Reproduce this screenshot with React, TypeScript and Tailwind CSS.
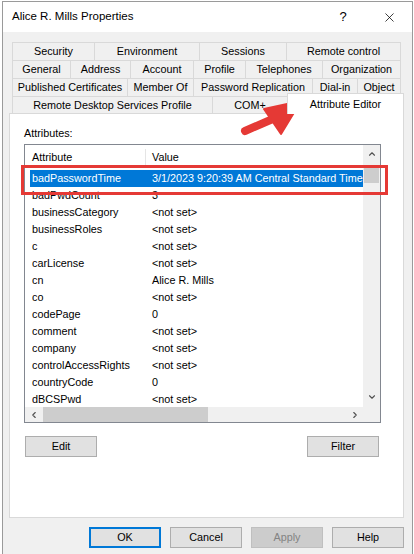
import React from 'react';
import { X, ChevronUp, ChevronDown, ChevronLeft, ChevronRight } from 'lucide-react';

type Tab = [string, number];

const tabRows: Tab[][] = [
  [['Security', 82], ['Environment', 105], ['Sessions', 87], ['Remote control', 115]],
  [['General', 58], ['Address', 60], ['Account', 63], ['Profile', 52], ['Telephones', 77], ['Organization', 79]],
  [['Published Certificates', 115], ['Member Of', 66], ['Password Replication', 119], ['Dial-in', 45], ['Object', 44]],
];

const attributes: [string, string][] = [
  ['badPasswordTime', '3/1/2023 9:20:39 AM Central Standard Time'],
  ['badPwdCount', '3'],
  ['businessCategory', '<not set>'],
  ['businessRoles', '<not set>'],
  ['c', '<not set>'],
  ['carLicense', '<not set>'],
  ['cn', 'Alice R. Mills'],
  ['co', '<not set>'],
  ['codePage', '0'],
  ['comment', '<not set>'],
  ['company', '<not set>'],
  ['controlAccessRights', '<not set>'],
  ['countryCode', '0'],
  ['dBCSPwd', '<not set>'],
];

function Button({ label, variant }: { label: string; variant?: 'default' | 'disabled' }) {
  if (variant === 'default') {
    return (
      <div className="w-[72px] h-[21px] flex items-center justify-center bg-[#e1e1e1] border-2 border-[#0078d7] text-black">
        {label}
      </div>
    );
  }
  if (variant === 'disabled') {
    return (
      <div className="w-[72px] h-[21px] flex items-center justify-center bg-[#cccccc] border border-[#bfbfbf] text-[#838383]">
        {label}
      </div>
    );
  }
  return (
    <div className="w-[72px] h-[21px] flex items-center justify-center bg-[#e1e1e1] border border-[#adadad] text-black">
      {label}
    </div>
  );
}

export default function App() {
  return (
    <div className="relative w-[414px] h-[554px] bg-white overflow-hidden font-['Liberation_Sans',Arial,sans-serif] text-[10.8px] text-black">
      <div className="ml-[2px] mt-px w-[411px] h-[560px] border border-[#9a9a9a] flex flex-col">
        {/* title bar */}
        <div className="h-[30px] flex items-center bg-white shrink-0">
          <span className="pl-[9px] text-[11.5px]">Alice R. Mills Properties</span>
          <div className="ml-auto w-[46px] flex justify-center text-[13px]">?</div>
          <div className="w-[46px] flex justify-center">
            <X size={15} strokeWidth={1.2} />
          </div>
        </div>

        {/* body */}
        <div className="flex-1 bg-[#f0f0f0] pl-[6px] pt-[10px]">
          <div className="ml-[3px]">
            {tabRows.map((row, i) => (
              <div key={i} className="flex h-[18px]">
                {row.map(([label, w], j) => (
                  <div
                    key={label}
                    style={{ width: w }}
                    className={`h-full flex items-center justify-center border-t border-l border-[#d9d9d9] whitespace-nowrap ${j === row.length - 1 ? 'border-r' : ''}`}
                  >
                    {label}
                  </div>
                ))}
              </div>
            ))}
            <div className="flex h-[17px] items-end">
              <div className="w-[200px] h-full flex items-center justify-center border-t border-l border-[#d9d9d9]">
                Remote Desktop Services Profile
              </div>
              <div className="w-[75px] h-full flex items-center justify-center border-t border-l border-[#d9d9d9]">
                COM+
              </div>
              <div className="relative z-10 w-[117px] h-[21px] -mb-px flex items-start justify-center pt-[2px] bg-white border-t border-l border-r border-[#d9d9d9]">
                Attribute Editor
              </div>
            </div>
          </div>

          {/* tab panel */}
          <div className="w-[395px] h-[405px] bg-white border border-[#d9d9d9] pt-[11px] pl-[14px]">
            <div className="h-[16px] leading-[16px]">Attributes:</div>
            <div className="mt-[3px] w-[357px] h-[279px] border border-[#828790] flex flex-col bg-white">
              <div className="flex h-[262px]">
                <div className="w-[338px] overflow-hidden">
                  <div className="flex h-[25px] items-center">
                    <div className="w-[121px] h-[17px] pl-[7px] flex items-center border-r border-[#e5e5e5]">Attribute</div>
                    <div className="pl-[6px]">Value</div>
                  </div>
                  <div className="pl-[5px]">
                    {attributes.map(([name, value], i) => (
                      <div
                        key={name}
                        className={`flex h-[17px] items-center whitespace-nowrap ${i === 0 ? 'bg-[#0078d7] text-white' : ''}`}
                      >
                        <div className="w-[122px] shrink-0 pl-[2px]">{name}</div>
                        <div>{value}</div>
                      </div>
                    ))}
                  </div>
                </div>
                <div className="w-[17px] bg-[#f0f0f0] flex flex-col items-center">
                  <div className="h-[17px] flex items-center justify-center text-[#505050]">
                    <ChevronUp size={10} strokeWidth={2.6} />
                  </div>
                  <div className="mt-[4px] w-[15px] h-[17px] bg-[#cdcdcd]" />
                  <div className="flex-1" />
                  <div className="h-[17px] mb-[2px] flex items-center justify-center text-[#505050]">
                    <ChevronDown size={10} strokeWidth={2.6} />
                  </div>
                </div>
              </div>
              <div className="flex h-[15px] bg-[#f0f0f0]">
                <div className="w-[17px] flex items-center justify-center text-[#505050]">
                  <ChevronLeft size={10} strokeWidth={2.6} />
                </div>
                <div className="ml-px w-[165px] bg-[#cdcdcd]" />
                <div className="flex-1" />
                <div className="w-[17px] flex items-center justify-center text-[#505050]">
                  <ChevronRight size={10} strokeWidth={2.6} />
                </div>
                <div className="w-[17px] bg-[#f0f0f0]" />
              </div>
            </div>
            <div className="mt-[13px] w-[357px] flex justify-between">
              <div className="ml-px">
                <Button label="Edit" />
              </div>
              <div className="mr-[2px]">
                <Button label="Filter" />
              </div>
            </div>
          </div>

          {/* dialog buttons */}
          <div className="mt-[9px] pr-[8px] flex justify-end gap-[9px]">
            <Button label="OK" variant="default" />
            <Button label="Cancel" />
            <Button label="Apply" variant="disabled" />
            <Button label="Help" />
          </div>
        </div>
      </div>

      {/* annotation: red highlight box */}
      <div className="absolute left-[21px] top-[165px] w-[367px] h-[30px] border-[3px] border-[#e53935]" />

      {/* annotation: arrow */}
      <svg className="absolute left-[236px] top-[96px]" width="72" height="44" viewBox="236 96 72 44">
        <line x1="245" y1="131" x2="275" y2="118" stroke="#e53935" strokeWidth="8" strokeLinecap="round" />
        <polygon points="301,101 264,109 281,134" fill="#e53935" stroke="#e53935" strokeWidth="2" strokeLinejoin="round" />
      </svg>
    </div>
  );
}
